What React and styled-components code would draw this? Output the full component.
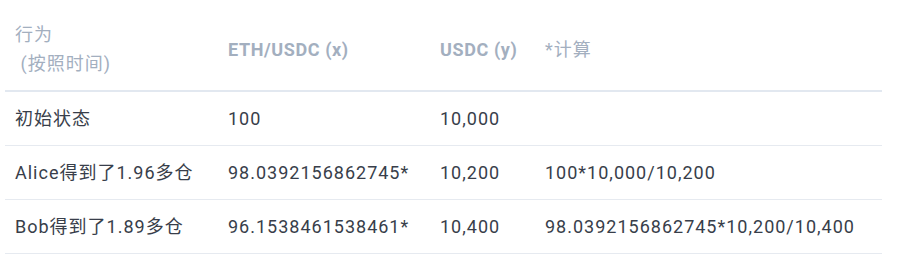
import React from 'react'
import styled, { createGlobalStyle } from 'styled-components'

const GlobalStyle = createGlobalStyle`
  html, body {
    margin: 0;
    padding: 0;
    background: #fff;
  }
  body {
    padding: 8px 0 0 5px;
    font-family: Roboto, "Noto Sans CJK SC", sans-serif;
  }
`

const Table = styled.table`
  width: 877px;
  border-collapse: collapse;
  table-layout: fixed;
  font-size: 18px;
  letter-spacing: 1px;
  line-height: 29px;
  color: #383e4a;
`

const Th = styled.th`
  text-align: left;
  vertical-align: middle;
  padding: 12px 10px;
  color: #a3afbf;
  font-weight: ${props => (props.$bold ? 700 : 400)};
  letter-spacing: ${props => (props.$bold ? '0.6px' : '1px')};
  border-bottom: 2px solid #e2e8f0;
`

const Td = styled.td`
  padding: 12px 10px;
  border-bottom: 1px solid #e6eaf0;
  white-space: nowrap;
`

const rows = [
  ['初始状态', '100', '10,000', ''],
  ['Alice得到了1.96多仓', '98.0392156862745*', '10,200', '100*10,000/10,200'],
  ['Bob得到了1.89多仓', '96.1538461538461*', '10,400', '98.0392156862745*10,200/10,400'],
]

const App = () => (
  <>
    <GlobalStyle />
    <Table>
      <colgroup>
        <col style={{ width: 213 }} />
        <col style={{ width: 212 }} />
        <col style={{ width: 105 }} />
        <col />
      </colgroup>
      <thead>
        <tr>
          <Th>
            行为
            <br />
            {'\u00a0(按照时间)'}
          </Th>
          <Th $bold>ETH/USDC (x)</Th>
          <Th $bold>USDC (y)</Th>
          <Th>*计算</Th>
        </tr>
      </thead>
      <tbody>
        {rows.map(row => (
          <tr key={row[0]}>
            {row.map((cell, i) => (
              <Td key={i}>{cell}</Td>
            ))}
          </tr>
        ))}
      </tbody>
    </Table>
  </>
)

export default App
